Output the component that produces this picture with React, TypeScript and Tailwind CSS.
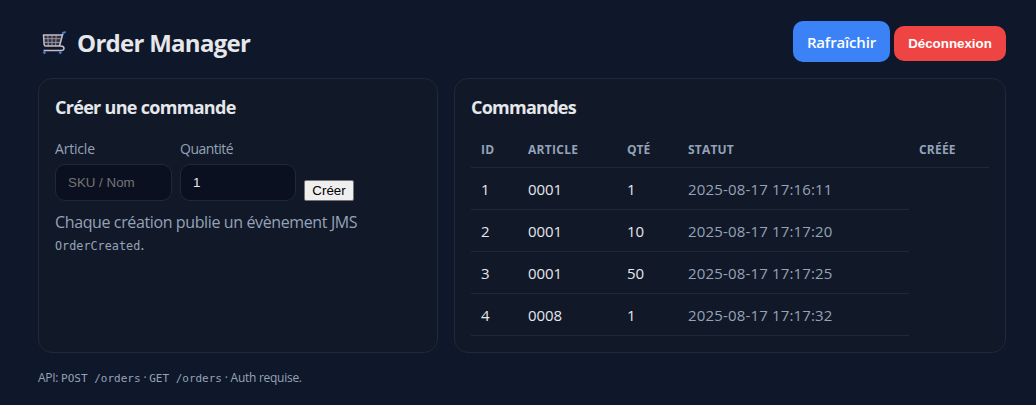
import React from "react";

const orders = [
  { id: 1, item: "0001", qty: 1, created: "2025-08-17 17:16:11" },
  { id: 2, item: "0001", qty: 10, created: "2025-08-17 17:17:20" },
  { id: 3, item: "0001", qty: 50, created: "2025-08-17 17:17:25" },
  { id: 4, item: "0008", qty: 1, created: "2025-08-17 17:17:32" },
];

function CartIcon() {
  return (
    <svg className="h-6 w-6 shrink-0" viewBox="0 0 24 24" fill="none" aria-hidden="true">
      <path d="M1.5 4H19.8L17.2 15H3.6Q2.3 15 2.2 13.8Z" fill="#30303e" />
      <path d="M5.8 4.3 6.3 15M10 4.3V15M14.2 4.3 13.6 15M1.9 7.7H18.8M2.1 11.4H18" stroke="#a39ca8" strokeWidth="0.9" />
      <path d="M20.2 4H1.5L2.2 13.8Q2.3 15 3.6 15H18.6Q22 15 22 17.3 22 19.6 19 19.6H1.6" stroke="#c5bdc7" strokeWidth="1.5" strokeLinejoin="round" />
      <path d="M17.5 15 20.8 2.8" stroke="#c5bdc7" strokeWidth="1.6" />
      <path d="M20.9 2 23 1.2" stroke="#3b82dc" strokeWidth="1.9" strokeLinecap="round" />
      <circle cx="2.4" cy="21.6" r="1.4" fill="#3b82dc" />
      <circle cx="18.3" cy="21.6" r="1.4" fill="#3b82dc" />
    </svg>
  );
}

export default function App() {
  return (
    <div className="h-[405px] overflow-hidden bg-[#0f172a] px-[30px] font-['Open_Sans','Noto_Sans',sans-serif] text-[#e5e7eb]">
      <div className="pl-2 pt-[21px]">
        <header className="flex h-[41px] w-[968px] items-center justify-between">
          <h1 className="flex items-center gap-[11px] pt-[3px] pl-1 text-2xl font-bold tracking-[-0.72px]">
            <CartIcon />
            <span className="whitespace-nowrap">Order Manager</span>
          </h1>
          <div className="flex items-center gap-1">
            <button className="h-[41px] w-[97px] rounded-[10px] bg-[#3b82f6] pt-px text-[15px] font-semibold tracking-[-0.15px] text-white">Rafraîchir</button>
            <button className="mt-1 h-[35px] w-28 rounded-[10px] bg-[#ef4444] font-['Liberation_Sans',sans-serif] text-[13.333px] font-bold text-white">Déconnexion</button>
          </div>
        </header>

        <main className="mt-4 flex w-[968px] gap-4">
          <section className="h-[275px] w-[400px] rounded-[14px] border border-[#1f2937] bg-[#111827] px-4">
            <h2 className="mt-4 text-lg leading-6 font-bold tracking-[-0.7px]">Créer une commande</h2>
            <form className="mt-5 flex items-end gap-2" onSubmit={(e) => e.preventDefault()}>
              <label className="flex w-[117px] flex-col gap-[5px] text-sm leading-5 tracking-[-0.2px] text-[#94a3b8]">
                Article
                <input className="h-[37px] w-full rounded-[10px] border border-[#1f2937] bg-[#0b1020] px-3 font-['Liberation_Sans',sans-serif] text-[13.333px] tracking-normal text-[#e5e7eb] placeholder:text-[#757575]" placeholder="SKU / Nom" />
              </label>
              <label className="flex w-[116px] flex-col gap-[5px] text-sm leading-5 tracking-[-0.5px] text-[#94a3b8]">
                Quantité
                <input className="h-[37px] w-full rounded-[10px] border border-[#1f2937] bg-[#0b1020] px-3 font-['Liberation_Sans',sans-serif] text-[13.333px] tracking-normal text-[#e5e7eb]" defaultValue="1" />
              </label>
              <button className="h-[21px] w-[50px] rounded-[2px] border border-[#767676] bg-[#efefef] font-['Liberation_Sans',sans-serif] text-[13.333px] leading-none text-black">Créer</button>
            </form>
            <div className="mt-[10px] text-base leading-[22px] text-[#94a3b8]">
              <p className="whitespace-nowrap tracking-[-0.38px]">Chaque création publie un évènement JMS</p>
              <p><code className="font-['DejaVu_Sans_Mono',monospace] text-[11.8px]">OrderCreated</code>.</p>
            </div>
          </section>

          <section className="h-[275px] w-[552px] rounded-[14px] border border-[#1f2937] bg-[#111827] px-4">
            <h2 className="mt-4 text-lg leading-6 font-bold tracking-[-0.75px]">Commandes</h2>
            <table className="mt-3 w-[518px] table-fixed border-collapse text-left">
              <colgroup>
                <col className="w-[47px]" />
                <col className="w-[99px]" />
                <col className="w-[61px]" />
                <col className="w-[231px]" />
                <col className="w-[80px]" />
              </colgroup>
              <thead>
                <tr className="h-9 border-b border-[#1f2937] text-xs tracking-[0.2px] text-[#94a3b8]">
                  <th className="px-[10px] pt-[3px] pb-0">ID</th>
                  <th className="px-[10px] pt-[3px] pb-0 tracking-[0.3px]">ARTICLE</th>
                  <th className="px-[10px] pt-[3px] pb-0 tracking-[0px]">QTÉ</th>
                  <th className="px-[10px] pt-[3px] pb-0">STATUT</th>
                  <th className="px-[10px] pt-[3px] pb-0">CRÉÉE</th>
                </tr>
              </thead>
              <tbody className="text-[15px] tracking-[-0.1px]">
                {orders.map((order) => (
                  <tr key={order.id} className="h-[42px]">
                    <td className="border-b border-[#1f2937] px-[10px] pt-[2px]">{order.id}</td>
                    <td className="border-b border-[#1f2937] px-[10px] pt-[2px]">{order.item}</td>
                    <td className="border-b border-[#1f2937] px-[10px] pt-[2px]">{order.qty}</td>
                    <td className="border-b border-[#1f2937] px-[10px] pt-[2px] tracking-[0.16px] text-[#94a3b8]">{order.created}</td>
                  </tr>
                ))}
              </tbody>
            </table>
          </section>
        </main>

        <footer className="mt-4 text-xs leading-[18px] tracking-[-0.27px] whitespace-nowrap text-[#94a3b8]">
          API: <code className="font-['DejaVu_Sans_Mono',monospace] text-[11px] tracking-normal">POST /orders</code> · <code className="font-['DejaVu_Sans_Mono',monospace] text-[11px] tracking-normal">GET /orders</code> · Auth requise.
        </footer>
      </div>
    </div>
  );
}
